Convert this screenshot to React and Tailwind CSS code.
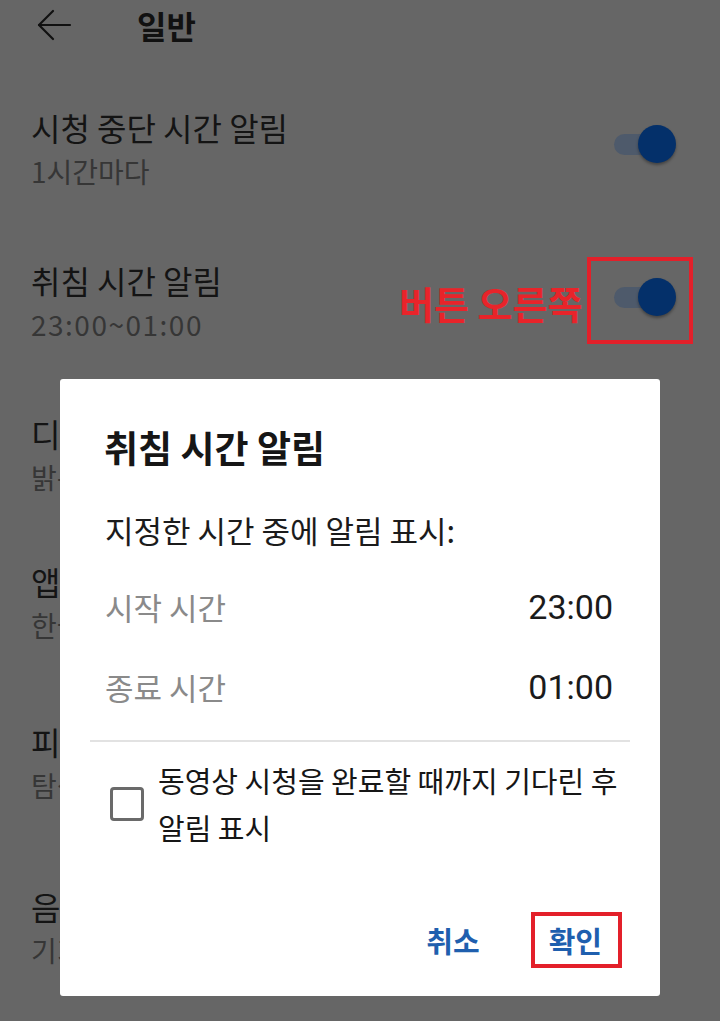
import React from "react";

const FONT = { fontFamily: '"Noto Sans CJK KR", "Noto Sans", sans-serif' };
const ROBOTO = { fontFamily: 'Roboto, "Noto Sans", sans-serif' };

function Toggle() {
  return (
    <div className="relative w-[62px] h-[40px] shrink-0">
      <div className="absolute left-0 top-[10px] w-[50px] h-[21px] rounded-full bg-[#4e5a6b]" />
      <div className="absolute right-0 top-[1px] w-[38px] h-[38px] rounded-full bg-[#04306a] shadow-[0_2px_3px_rgba(0,0,0,0.35)]" />
    </div>
  );
}

function Item({ title, sub, toggle, className, subClass = "" }) {
  return (
    <div className={"flex items-center justify-between pl-[31px] pr-[44px] " + className}>
      <div className="flex flex-col">
        <div className="text-[32px] leading-[40px] text-[#141414] whitespace-nowrap">{title}</div>
        <div className={"text-[28px] leading-[36px] mt-[6px] text-[#363636] whitespace-nowrap " + subClass}>{sub}</div>
      </div>
      {toggle && <div className="-mt-[8px]"><Toggle /></div>}
    </div>
  );
}

export default function App() {
  return (
    <div className="relative w-[720px] h-[1021px] bg-[#666666] overflow-hidden" style={FONT}>
      {/* header */}
      <div className="flex items-center h-[50px] pl-[36px]">
        <svg width="36" height="32" viewBox="0 0 36 32" fill="none" stroke="#111" strokeWidth="2.2" strokeLinecap="round" strokeLinejoin="round">
          <path d="M34 16H3" />
          <path d="M17 2L3 16l14 14" />
        </svg>
        <div className="ml-[65px] text-[32px] font-bold text-[#111] leading-[40px]">일반</div>
      </div>

      <Item className="mt-[57px]" title="시청 중단 시간 알림" sub="1시간마다" toggle />
      <Item className="mt-[71px]" title="취침 시간 알림" sub="23:00~01:00" subClass="tracking-[1.5px]" toggle />
      <Item className="mt-[71px]" title="디스플레이" sub="밝은 테마" />
      <Item className="mt-[66px]" title="앱 언어" sub="한국어" />
      <Item className="mt-[78px]" title="피드 재생" sub="탐색 및 구독" />
      <Item className="mt-[83px]" title="음성 검색" sub="기기 언어" />

      {/* annotation: red label + box */}
      <div className="absolute left-[399px] top-[280px] text-[38px] font-bold leading-[46px] text-[#e8242a] whitespace-nowrap">
        버튼 오른쪽
      </div>
      <div className="absolute left-[587px] top-[257px] w-[106px] h-[87px] border-[4px] border-[#e3202a]" />

      {/* dialog */}
      <div className="absolute left-[60px] top-[379px] w-[600px] h-[617px] bg-white rounded-[3px] flex flex-col">
        <div className="pl-[44px] pt-[46px] text-[37px] font-bold leading-[44px] text-[#161616] whitespace-nowrap">취침 시간 알림</div>
        <div className="pl-[45px] mt-[39px] text-[31px] leading-[44px] text-[#1b1b1b] whitespace-nowrap">지정한 시간 중에 알림 표시:</div>
        <div className="flex justify-between items-center pl-[45px] pr-[47px] mt-[35px] h-[40px]">
          <span className="text-[31px] text-[#8a8a8a] whitespace-nowrap">시작 시간</span>
          <span className="text-[34px] text-[#1b1b1b]" style={ROBOTO}>23:00</span>
        </div>
        <div className="flex justify-between items-center pl-[45px] pr-[47px] mt-[40px] h-[40px]">
          <span className="text-[31px] text-[#8a8a8a] whitespace-nowrap">종료 시간</span>
          <span className="text-[34px] text-[#1b1b1b]" style={ROBOTO}>01:00</span>
        </div>
        <div className="mx-[30px] mt-[33px] h-[2px] bg-[#e2e2e2]" />
        <div className="flex items-center pl-[50px] pr-[10px] mt-[15px]">
          <div className="w-[34px] h-[34px] border-[3px] border-[#6a6a6a] rounded-[4px] shrink-0" />
          <div className="ml-[14px] text-[29px] leading-[47px] text-[#161616] whitespace-nowrap">
            동영상 시청을 완료할 때까지 기다린 후<br />알림 표시
          </div>
        </div>
        <div className="flex-1" />
        <div className="flex justify-end items-center pr-[58px] pb-[34px] gap-[69px] leading-[44px]">
          <span className="text-[29px] font-bold text-[#1f5fae]">취소</span>
          <span className="text-[29px] font-bold text-[#1f5fae]">확인</span>
        </div>
        <div className="absolute left-[471px] top-[533px] w-[91px] h-[56px] border-[4px] border-[#e3202a]" />
      </div>
    </div>
  );
}
